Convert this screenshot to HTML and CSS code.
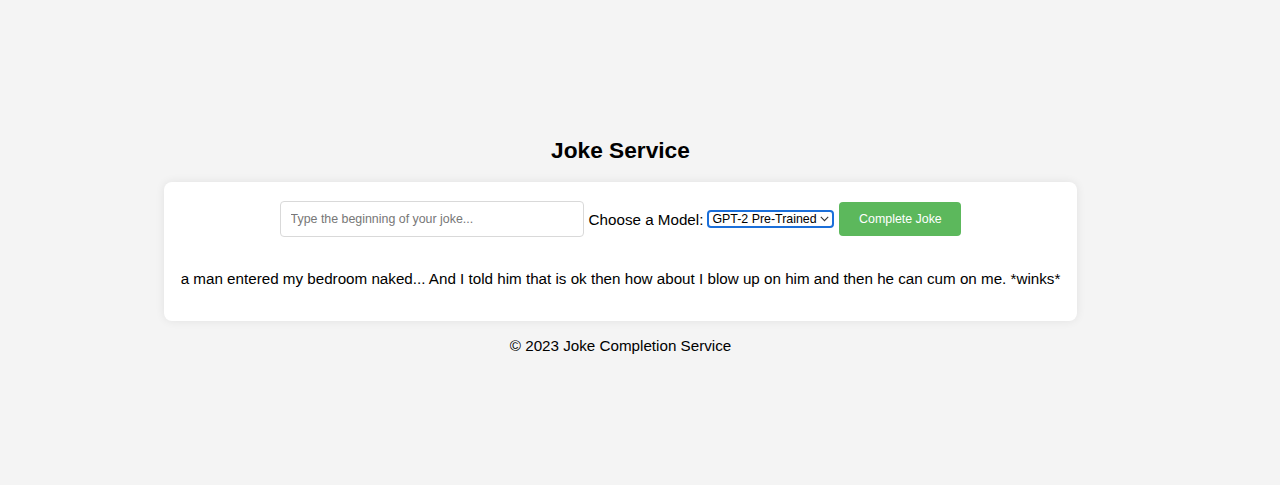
FILE: index.html
```html
<!DOCTYPE html>
<html lang="en">
<head>
<meta charset="utf-8">
<title>Joke Service</title>
<link rel="stylesheet" href="styles.css">
</head>
<body>
<div class="page">
  <h1 class="title">Joke Service</h1>
  <div class="card">
    <form class="row">
      <input class="joke-input" type="text" placeholder="Type the beginning of your joke...">
      <label class="model-label" for="model">Choose a Model:</label>
      <span class="select-wrap">
        <select id="model" class="model-select">
          <option>GPT-2 Pre-Trained</option>
        </select>
        <svg class="chev" width="9" height="6" viewBox="0 0 9 6"><path d="M0.8 0.9 L4.5 4.6 L8.2 0.9" fill="none" stroke="#333" stroke-width="1.1"/></svg>
      </span>
      <button class="btn" type="button">Complete Joke</button>
    </form>
    <p class="joke">a man entered my bedroom naked... And I told him that is ok then how about I blow up on him and then he can cum on me. *winks*</p>
  </div>
  <p class="footer">© 2023 Joke Completion Service</p>
</div>
</body>
</html>
```
FILE: styles.css
```css
html, body {
  margin: 0;
  padding: 0;
  background: #f4f4f4;
  font-family: "Liberation Sans", Arial, sans-serif;
  color: #000;
}
.page {
  width: 1241px;
  padding-top: 136px;
  display: flex;
  flex-direction: column;
  align-items: center;
}
.title {
  margin: 0;
  font-size: 22.7px;
  line-height: 28px;
  font-weight: bold;
}
.card {
  margin-top: 18px;
  width: 913px;
  box-sizing: border-box;
  background: #fff;
  border-radius: 8px;
  box-shadow: 0 0 10px rgba(0, 0, 0, 0.08);
  padding: 19px 10px 33px;
}
.row {
  display: flex;
  align-items: center;
  justify-content: center;
  margin: 0;
}
.joke-input {
  width: 304px;
  height: 36px;
  box-sizing: border-box;
  border: 1px solid #d9d9d9;
  border-radius: 4px;
  padding: 0 10px;
  font-family: "Liberation Sans", Arial, sans-serif;
  font-size: 12.4px;
  color: #333;
  outline: none;
}
.joke-input::placeholder {
  color: #777;
}
.model-label {
  margin-left: 5px;
  font-size: 15.2px;
}
.select-wrap {
  position: relative;
  margin-left: 4px;
  display: inline-flex;
}
.model-select {
  appearance: none;
  -webkit-appearance: none;
  width: 127px;
  height: 18px;
  box-sizing: border-box;
  border: 2px solid #1b6fd9;
  border-radius: 4px;
  background: #fff;
  padding: 0 12px 0 3px;
  font-family: "Liberation Sans", Arial, sans-serif;
  font-size: 12.4px;
  line-height: 14px;
  color: #000;
  outline: none;
}
.chev {
  position: absolute;
  right: 5px;
  top: 6px;
  pointer-events: none;
}
.btn {
  margin-left: 5px;
  width: 122px;
  height: 34px;
  border: none;
  border-radius: 4px;
  background: #5cb85c;
  color: #fff;
  font-family: "Liberation Sans", Arial, sans-serif;
  font-size: 12.4px;
}
.joke {
  margin: 33px 0 0;
  text-align: center;
  font-size: 15.2px;
  line-height: 18px;
  white-space: nowrap;
}
.footer {
  margin: 16px 0 0;
  font-size: 15.2px;
  line-height: 18px;
}
```
